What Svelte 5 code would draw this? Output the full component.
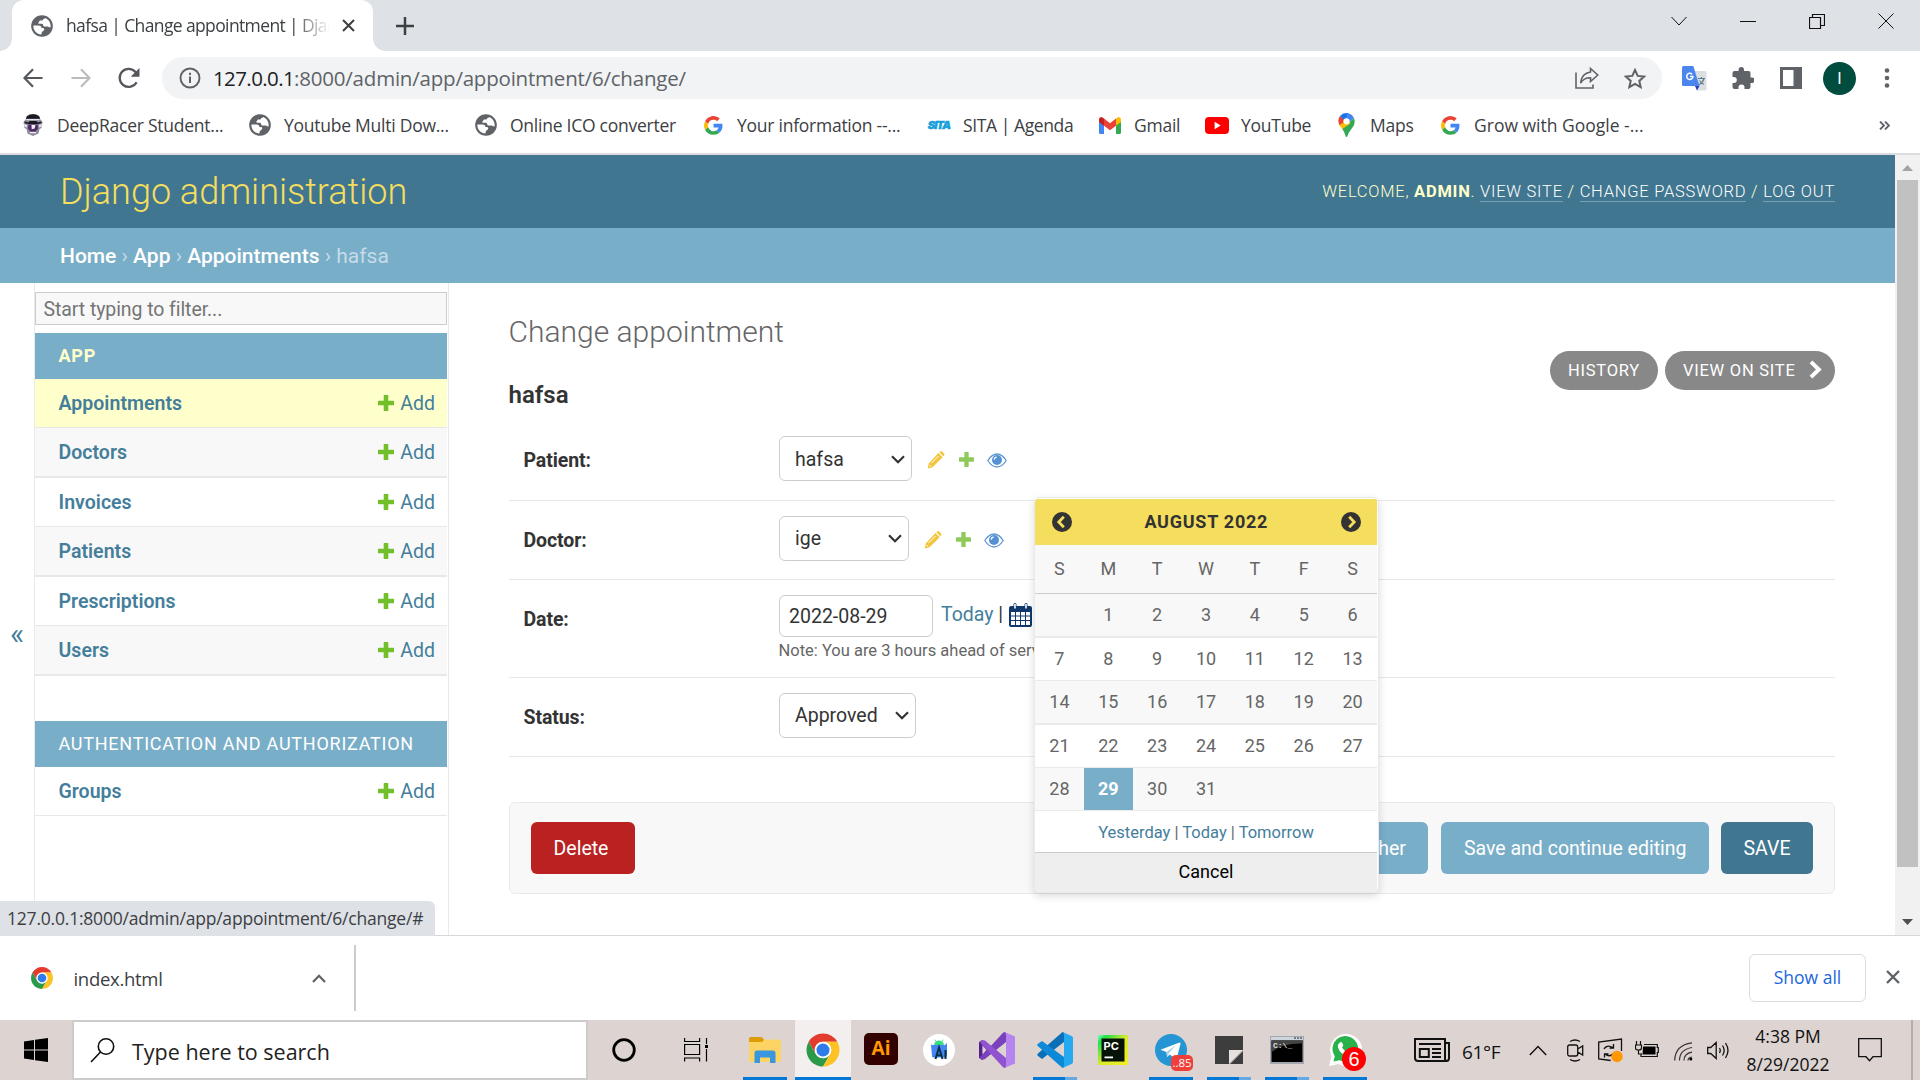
<script>
  const bookmarks = [
    { icon: 'racer', label: 'DeepRacer Student...' },
    { icon: 'globe', label: 'Youtube Multi Dow...' },
    { icon: 'globe', label: 'Online ICO converter' },
    { icon: 'google', label: 'Your information --...' },
    { icon: 'sita', label: 'SITA | Agenda' },
    { icon: 'gmail', label: 'Gmail' },
    { icon: 'youtube', label: 'YouTube' },
    { icon: 'maps', label: 'Maps' },
    { icon: 'google', label: 'Grow with Google -...' }
  ];
  const models = ['Appointments', 'Doctors', 'Invoices', 'Patients', 'Prescriptions', 'Users'];
  const weeks = [
    ['', 1, 2, 3, 4, 5, 6],
    [7, 8, 9, 10, 11, 12, 13],
    [14, 15, 16, 17, 18, 19, 20],
    [21, 22, 23, 24, 25, 26, 27],
    [28, 29, 30, 31, '', '', '']
  ];
  const days = ['S', 'M', 'T', 'W', 'T', 'F', 'S'];
  const apps = [
    { id: 'explorer', run: 'one' },
    { id: 'chrome', run: 'active' },
    { id: 'ai', run: '' },
    { id: 'android', run: '' },
    { id: 'vs', run: '' },
    { id: 'code', run: 'multi' },
    { id: 'pycharm', run: '' },
    { id: 'telegram', run: 'one' },
    { id: 'notes', run: 'multi' },
    { id: 'cmd', run: 'multi' },
    { id: 'whatsapp', run: 'one' }
  ];
</script>

{#snippet globe()}
  <svg width="26" height="26" viewBox="0 0 24 24"><path fill="#5f6368" d="M12 2C6.48 2 2 6.48 2 12s4.48 10 10 10 10-4.48 10-10S17.52 2 12 2z" /><path fill="#fff" d="M14.8 4.5c3 1.100 5.200 4 5.200 7.500 0 .6-.1 1-.2 1.400-.9.300-1.600-.9-2.700-.9h-2.600c-1 0-1.500-.8-1.500-1.700 0-.8-1-.9-1.900-.9H9.400c-.7 0-1-.6-.6-1.200L10 7h2.300c.6 0 .5-1.200 1.100-1.400.6-.2 1.200-.4 1.400-1.100zM4.200 11.500h4.600c2 0 2.700 1.200 2.700 2.300h1.300c.9 0 1.400.8 1.200 1.600-.3 1.200-1.600 1.300-2 2.200-.3.700-.5 1.500-.6 2.300-4-.2-7.300-3.500-7.400-7.700z" /></svg>
{/snippet}

{#snippet chrome(size)}
  <svg width={size} height={size} viewBox="0 0 48 48">
    <path fill="#e33b2e" d="M24 13H43.05A22 22 0 0 0 4.950 13L14.470 29.500A11 11 0 0 1 24 13Z" />
    <path fill="#2a9a49" d="M14.470 29.500L4.950 13A22 22 0 0 0 24 46L33.530 29.500A11 11 0 0 1 14.470 29.500Z" />
    <path fill="#fdc223" d="M33.530 29.500L24 46A22 22 0 0 0 43.050 13H24A11 11 0 0 1 33.530 29.500Z" />
    <circle cx="24" cy="24" r="11" fill="#fff" /><circle cx="24" cy="24" r="8.700" fill="#2f7bea" />
  </svg>
{/snippet}

{#snippet plus(color, size)}
  <svg width={size} height={size} viewBox="0 0 16 16"><path fill={color} d="M6.300 0h3.400q.6 0 .6.600v5.100h5.100q.6 0 .6.600v3.400q0 .6-.6.600h-5.100v5.100q0 .6-.6.600H6.300q-.6 0-.6-.6v-5.100H.6q-.6 0-.6-.6V6.300q0-.6.6-.6h5.100V.6q0-.6.6-.6z" /></svg>
{/snippet}

{#snippet related()}
  <span class="related">
    <svg width="18" height="18" viewBox="0 0 18 18"><path fill="#efb80b" opacity=".8" d="M12.300 1.200l1.300-1q.6-.4 1.200.1l2.500 2.500q.5.600.1 1.200l-1.100 1.300zM11.400 2.100l4.300 4.200L5.300 16.400 0.800 17.500l.9-4.900z" /><path stroke="#fff" stroke-width="1" d="M4.500 12L11.500 5M2.500 14l1.600 1.700" /></svg>
    {@render plus('#8dca5a', 15)}
    <svg width="20" height="15" viewBox="0 0 20 15"><path fill="#fff" stroke="#5f97d3" stroke-width="1.300" d="M.8 7.500Q5 1 10 1t9.200 6.500Q15 14 10 14T.8 7.500z" /><circle cx="10" cy="7" r="5" fill="#5490d2" /><path d="M7.200 6.600a2.700 2.700 0 0 1 2.500-2.500" fill="none" stroke="#fff" stroke-width="1.200" /></svg>
  </span>
{/snippet}

{#snippet caret()}
  <svg width="14" height="9" viewBox="0 0 14 9"><path d="M1 1.200l6 6 6-6" fill="none" stroke="#333" stroke-width="2.200" /></svg>
{/snippet}

{#snippet siteIcon(name)}
  {#if name === 'globe'}
    {@render globe()}
  {:else if name === 'racer'}
    <svg width="20" height="22" viewBox="0 0 20 22"><path fill="#8d8998" d="M3 5q0-5 7-5t7 5l2.500 3-1 6-2 1-1 4.500-5.500 2.500-5.500-2.500-1-4.500-2-1-1-6z" /><path fill="#1a1820" d="M4 2.200Q10-1.500 16 2.200l1.200 2.600H2.800zM1.500 7.500l4 1 1-1.500h7l1 1.500 4-1-.3 1.800-3.200.7h-10l-3.200-.7z" /><path fill="#e4e2ec" d="M3 5h14l-.8 1.300H3.800zM1 10l3 .8v2.700l-2.500-.8zM19 10l-3 .8v2.700l2.500-.8z" /><path fill="#4b2a66" d="M5.500 10.500h9l.5 4-2.500 3h-5L5 14.500z" /><path fill="#f3eff9" d="M8.500 11h4l-.8 3.500-3 .8zM6.500 18h7l-1 1.300h-5z" /></svg>
  {:else if name === 'google'}
    <svg width="19" height="19" viewBox="2 2 44 44"><path fill="#fbbc05" d="M11.500 28.200a13 13 0 0 1 0-8.400l-7-5.500a21.500 21.500 0 0 0 0 19.400z" /><path fill="#ea4335" d="M24 10.800c3.200 0 6 1.100 8.200 3.200l6.200-6.200A21.500 21.500 0 0 0 4.500 14.300l7.100 5.500C13.300 14.600 18.200 10.800 24 10.800z" /><path fill="#34a853" d="M24 45.500c5.800 0 10.700-1.900 14.200-5.200l-6.900-5.400A13 13 0 0 1 11.500 28.200l-7 5.500A21.500 21.500 0 0 0 24 45.500z" /><path fill="#4285f4" d="M24 20v8.600h11.700c-.5 2.700-2 4.800-4.400 6.300l6.900 5.400c5.600-5.100 7.600-12.800 6.200-20.300z" /></svg>
  {:else if name === 'sita'}
    <span class="sita">SITA</span>
  {:else if name === 'gmail'}
    <svg width="22" height="17" viewBox="0 0 22 17"><path fill="#4285f4" d="M0 3.500V15.500q0 1.500 1.500 1.500H5V7.500z" /><path fill="#34a853" d="M17 7.500V17h3.500q1.500 0 1.500-1.500v-12z" /><path fill="#c5221f" d="M0 5V2.500Q0 0 2.200 0q1 0 2.800 1.500V8.700z" /><path fill="#fbbc04" d="M22 5V2.500Q22 0 19.800 0q-1 0-2.800 1.500V8.700z" /><path fill="#ea4335" d="M5 1.500l6 4.700 6-4.700v7.200l-6 4.600-6-4.600z" /></svg>
  {:else if name === 'youtube'}
    <svg width="24" height="17" viewBox="0 0 24 17"><rect width="24" height="17" rx="4" fill="#f00" /><path fill="#fff" d="M9.600 4.800l6 3.700-6 3.700z" /></svg>
  {:else}
    <svg width="17" height="24" viewBox="0 0 17 24"><path fill="#34a853" d="M8.500 24q-1 0-1.300-2Q6.500 19 4 15.500L16 5q1.500 4-.5 8l-3.200 4.500Q10.500 20 9.800 22q-.3 2-1.300 2z" /><path fill="#fbbc04" d="M1.300 12L8 5.500l4.500 5L4.300 16z" /><path fill="#ea4335" d="M2 3l6 5-6.600 4Q-1 7 2 3z" /><path fill="#1a73e8" d="M2 3Q5-.7 10.500.3L7 8z" /><path fill="#4285f4" d="M10.500.3Q14.500 1.500 16 5l-6 5-4-2z" /><circle cx="8.500" cy="8.300" r="3.100" fill="#fff" /></svg>
  {/if}
{/snippet}

{#snippet appIcon(id)}
  {#if id === 'explorer'}
    <svg width="32" height="27" viewBox="0 0 32 27"><path fill="#dd9d07" d="M0 1.500Q0 0 1.500 0h11L15 2.500V6H0z" /><path fill="#fdd363" d="M0 5h13l2.500-2.500h15Q32 2.500 32 4v19.500q0 1.500-1.500 1.500h-29Q0 25 0 23.500z" /><path fill="#3a96dd" d="M5.500 26V16q0-2.500 2.500-2.500h16q2.500 0 2.500 2.500v10H21v-5.500H11V26z" /></svg>
  {:else if id === 'chrome'}
    {@render chrome(36)}
  {:else if id === 'ai'}
    <span class="ai">Ai</span>
  {:else if id === 'android'}
    <svg width="32" height="32" viewBox="0 0 32 32"><circle cx="16" cy="16" r="16" fill="#fff" /><path fill="#4285f4" d="M8 10.500l2 .5h12l2-2v12.500q0 2-2 2H10.500q-1.500 0-1.500-1.500z" /><path fill="#3ddc84" d="M11 11q.5-4.500 5-4.500t5 4.500z" /><path stroke="#3ddc84" d="M13 7.500l-1.300-1.800M19 7.500l1.300-1.800" /><path fill="none" stroke="#073042" stroke-width="2" d="M12.500 25l3.500-11.500 3.500 11.500M12.800 20.500q3 1.500 6.200 0M22.500 16v9" /></svg>
  {:else if id === 'vs'}
    <svg width="36" height="36" viewBox="0 0 36 36"><path fill="#6b38a8" d="M0 10l3-2 6 4.500v11L3 28l-3-2z" /><path fill="#52218a" d="M0 10l3 3v10l-3 3z" /><path fill="#ddd4d2" d="M3.500 13.500l4 4.500-4 4.500z" /><path fill="#7b40bb" d="M25.500 0q2 0 1.500 3v7L6 27l-3 1-2-2 3.500-4L24 .8z" /><path fill="#9153cf" d="M25.500 36q2 0 1.500-3v-7L6 8.500 3 8l-2 2 3.500 4L24 35.200z" /><path fill="#b684ef" d="M25.500 0L36 4.500v27L25.500 36q1.500-.8 1.500-3V3q0-2-1.500-3z" /></svg>
  {:else if id === 'code'}
    <svg width="36" height="36" viewBox="0 0 36 36"><path fill="#0b6fb8" d="M25.500 0q2 0 1.500 3v7L5 27l-4-3q-1.500-1.200 0-2.500z" /><path fill="#0d89d8" d="M25.500 36q2 0 1.500-3v-8L5 9l-4 2.800q-1.500 1.200 0 2.500z" /><path fill="#27a9f2" d="M25.500 0L34.500 4Q36 4.700 36 6v24q0 1.300-1.500 2l-9 4q1.500-.8 1.500-3V3q0-2-1.500-3z" /></svg>
  {:else if id === 'pycharm'}
    <svg width="30" height="30" viewBox="0 0 30 30"><defs><linearGradient id="pcg" x2="1" y2="1"><stop offset="0" stop-color="#8affc0" /><stop offset=".15" stop-color="#21e04d" /><stop offset=".5" stop-color="#d7ea2c" /><stop offset="1" stop-color="#f4ef20" /></linearGradient></defs><rect width="30" height="30" fill="url(#pcg)" /><rect x="3.500" y="3.500" width="23" height="23" fill="#071308" /><text x="5.500" y="15" class="pct">PC</text><rect x="6.500" y="21.500" width="8.500" height="1.800" fill="#fff" /></svg>
  {:else if id === 'telegram'}
    <span class="badged"><svg width="32" height="32" viewBox="0 0 32 32"><circle cx="16" cy="16" r="16" fill="#2595d3" /><path fill="#fff" d="M5.500 15.800L24.500 8.500q1.200 0 1 1.300L22 23.500q-1 1.500-2.500.5l-4.800-3.500-2.500 2.400-.8-4.900z" /><path fill="#a9cfe6" d="M11.500 18l9.500-7-7 8-2 4z" /></svg><b class="tg">..85</b></span>
  {:else if id === 'notes'}
    <svg width="28" height="28" viewBox="0 0 28 28"><path fill="#3d3d3d" d="M0 0h28v14l-14 14H0z" /><path fill="#e6e1df" d="M14 14h14L14 28z" /><path fill="#3d3d3d" d="M28 15v13H15z" /></svg>
  {:else if id === 'cmd'}
    <svg width="34" height="28" viewBox="0 0 34 28"><rect width="34" height="28" fill="#a2a8b0" /><rect x="1" y="1" width="32" height="3" fill="#cfd5dd" /><path stroke="#56606c" stroke-dasharray="2 1" stroke-width="1.500" d="M24 2h8" /><rect x="1.500" y="4.500" width="31" height="21.500" fill="#000" /><path fill="#444" d="M1.500 4.500h31v3Q12 7 1.500 16z" /><text x="3" y="11.500" class="cmdt">C:\_</text></svg>
  {:else}
    <span class="badged"><svg width="34" height="34" viewBox="0 0 34 34"><path fill="#fff" d="M1 33l2.500-9.500A16 16 0 1 1 10.500 31z" /><path fill="#29b24c" d="M5.500 28.500l1.300-5.300A12.800 12.800 0 1 1 11.500 27.300z" /><path fill="#fff" d="M12 9.500q1.500-1 2.300.5l1 2.500-1.200 2q1.800 3.500 5 4.800l1.700-1.700 3.500 1.900q.5 3.500-4 3.500-8-1-10.500-9-.2-3.300 2.200-4.500z" /></svg><b class="wa">6</b></span>
  {/if}
{/snippet}

<div class="screen">
  <header class="tabs">
    <div class="tab">
      {@render globe()}
      <span class="tab-title">hafsa | Change appointment | Django site</span>
      <svg width="13" height="13" viewBox="0 0 13 13"><path d="M1 1l11 11M12 1L1 12" stroke="#3c4043" stroke-width="2" /></svg>
    </div>
    <svg class="newtab" width="18" height="18" viewBox="0 0 18 18"><path d="M9 0v18M0 9h18" stroke="#3c4043" stroke-width="2.500" /></svg>
    <div class="wins">
      <svg width="16" height="16" viewBox="0 0 16 16"><path d="M.5 4l7.500 8 7.500-8" fill="none" stroke="#111" /></svg>
      <svg width="16" height="16" viewBox="0 0 16 16"><path d="M0 8.500h16" stroke="#111" /></svg>
      <svg width="16" height="16" viewBox="0 0 16 16"><path d="M.5 4.500h11v11h-11zM3.500 4.500v-3h12v11h-4" fill="none" stroke="#111" stroke-width="1.200" /></svg>
      <svg width="16" height="16" viewBox="0 0 16 16"><path d="M.5.500l15 15M15.500.5l-15 15" stroke="#111" /></svg>
    </div>
  </header>

  <div class="toolbar">
    <svg width="20" height="20" viewBox="0 0 20 20"><path d="M19.500 10H2M10 1.200L1.500 10l8.500 8.800" fill="none" stroke="#54585d" stroke-width="2.200" /></svg>
    <svg width="20" height="20" viewBox="0 0 20 20"><path d="M.5 10H18M10 1.200L18.500 10 10 18.800" fill="none" stroke="#babcbe" stroke-width="2.200" /></svg>
    <svg width="22" height="22" viewBox="0 0 22 22"><path d="M18.600 15.200A9 9 0 1 1 17.500 5l1.500 2" fill="none" stroke="#54585d" stroke-width="2.300" /><path fill="#54585d" d="M21.500 1v8.800h-8.800z" /></svg>
    <div class="omnibox">
      <svg width="22" height="22" viewBox="0 0 22 22"><circle cx="11" cy="11" r="9.500" fill="none" stroke="#5f6368" stroke-width="1.900" /><path d="M11 9.500v6.500M11 5.800v2.200" stroke="#5f6368" stroke-width="2" /></svg>
      <span class="url"><b>127.0.0.1</b>:8000/admin/app/appointment/6/change/</span>
      <svg width="24" height="22" viewBox="0 0 24 22"><path d="M1 5.500V21h17v-3.500" fill="none" stroke="#5f6368" stroke-width="1.600" /><path d="M15.500 1.500L22.800 8l-7.300 6.500v-3.700Q9 10.500 5.500 16 6.500 6.500 15.500 5z" fill="none" stroke="#5f6368" stroke-width="1.600" /></svg>
      <svg width="22" height="21" viewBox="0 0 22 21"><path d="M11 2l2.700 5.900 6.400.7-4.800 4.300 1.400 6.300L11 16l-5.700 3.200 1.400-6.300L1.900 8.600l6.400-.7z" fill="none" stroke="#5f6368" stroke-width="2" /></svg>
    </div>
    <div class="exts">
      <svg width="25" height="25" viewBox="0 0 25 25"><path fill="#dcdfe2" d="M9 5h14q1.500 0 1.500 1.500V23q0 1.500-1.500 1.500h-8z" /><path fill="#4a86ee" d="M1.500 0h9.800l6.200 20H1.500Q0 20 0 18.500v-17Q0 0 1.500 0z" /><path fill="#2a3fb5" d="M13 20h4.500L15 24.500z" /><path d="M16 12.500h7M19.500 11v1.500M22 12.500q-1 4-5 6M17.500 14.500q2 3 4.500 4" fill="none" stroke="#607d8b" stroke-width="1.200" /><path d="M10 8.200A3.100 3.100 0 1 0 10.900 10.500H8" fill="none" stroke="#fff" stroke-width="1.500" /></svg>
      <svg width="22" height="22" viewBox="0 0 22 22"><path fill="#5f6368" d="M20 10.500h-1.500V6q0-2-2-2H12V2.700a2.700 2.700 0 0 0-5.400 0V4H2.500Q.5 4 .5 6v4h1.300a3 3 0 0 1 0 6H.5v4q0 2 2 2h4v-1.500a3 3 0 0 1 6 0V22h4q2 0 2-2v-4H20a2.700 2.700 0 0 0 0-5.500z" /></svg>
      <svg width="22" height="22" viewBox="0 0 22 22"><path fill="#5f6368" fill-rule="evenodd" d="M0 0h22v22H0zM3 3v16h10.500V3z" /></svg>
      <span class="avatar">I</span>
      <svg width="6" height="20" viewBox="0 0 6 20"><circle cx="3" cy="2.500" r="2.300" fill="#5f6368" /><circle cx="3" cy="10" r="2.300" fill="#5f6368" /><circle cx="3" cy="17.500" r="2.300" fill="#5f6368" /></svg>
    </div>
  </div>

  <nav class="bookmarks">
    {#each bookmarks as b}
      <span class="bm"><i>{@render siteIcon(b.icon)}</i>{b.label}</span>
    {/each}
    <svg width="11" height="9" viewBox="0 0 11 9"><path d="M1 .5l4 4-4 4M6 .5l4 4-4 4" fill="none" stroke="#5f6368" stroke-width="1.800" /></svg>
  </nav>

  <div class="viewport">
    <div class="site">
      <div class="branding">
        <h1>Django administration</h1>
        <div class="tools">Welcome, <strong>admin</strong>. <a href="#v">View site</a> / <a href="#c">Change password</a> / <a href="#l">Log out</a></div>
      </div>
      <div class="crumbs"><b>Home</b> › <b>App</b> › <b>Appointments</b> › hafsa</div>
      <div class="body">
        <div class="toggle">«</div>
        <aside>
          <div class="filter">Start typing to filter...</div>
          <h3 class="cur">App</h3>
          {#each models as m, i}
            <div class="model" class:current={i === 0} class:even={i % 2 === 1}><b>{m}</b><span>{@render plus('#70bf2b', 16)}Add</span></div>
          {/each}
          <h3 class="auth">Authentication and Authorization</h3>
          <div class="model"><b>Groups</b><span>{@render plus('#70bf2b', 16)}Add</span></div>
        </aside>
        <main>
          <div class="object-tools"><span>History</span><span>View on site <svg width="13" height="19" viewBox="0 0 13 19"><path d="M2 1.800l7.800 7.700L2 17.200" fill="none" stroke="#fff" stroke-width="4" /></svg></span></div>
          <h1>Change appointment</h1>
          <h2>hafsa</h2>
          <div class="row r1"><label for="p">Patient:</label><div class="select p" id="p">hafsa{@render caret()}</div>{@render related()}</div>
          <div class="row"><label for="d">Doctor:</label><div class="select d" id="d">ige{@render caret()}</div>{@render related()}</div>
          <div class="row r3">
            <label for="dt">Date:</label>
            <div>
              <div class="dateline"><div class="input" id="dt">2022-08-29</div><span class="short"><a href="#t">Today</a>&nbsp;|</span>
                <svg width="23" height="24" viewBox="0 0 23 24"><path fill="#10386b" d="M2 3h2.500V1.500Q4.500 0 6 0t1.500 1.500V3h8V1.500Q15.500 0 17 0t1.500 1.500V3H21q2 0 2 2v17q0 2-2 2H2q-2 0-2-2V5q0-2 2-2z" /><path stroke="#fff" stroke-width="1.600" d="M6 1v4.500M17 1v4.500" /><path fill="#fff" d="M2 9h4v3.500H2zM7 9h4v3.500H7zM12 9h4v3.500h-4zM17 9h4v3.500h-4zM2 13.500h4V17H2zM7 13.500h4V17H7zM12 13.500h4V17h-4zM17 13.500h4V17h-4zM2 18h4v4H2zM7 18h4v4H7zM12 18h4v4h-4zM17 18h4v4h-4z" /></svg>
              </div>
              <div class="note">Note: You are 3 hours ahead of server time.</div>
            </div>
          </div>
          <div class="row"><label for="s">Status:</label><div class="select s" id="s">Approved{@render caret()}</div></div>
          <div class="submit">
            <span class="btn del">Delete</span>
            <span class="btn add">Save and add another</span>
            <span class="btn">Save and continue editing</span>
            <span class="btn def">SAVE</span>
          </div>

          <div class="calendar">
            <div class="caption">
              <svg width="20" height="20" viewBox="0 0 20 20"><circle cx="10" cy="10" r="10" fill="#333" /><path d="M11.800 4.800L6.800 10l5 5.200" fill="none" stroke="#f5dd5d" stroke-width="2.800" /></svg>
              <span>August 2022</span>
              <svg width="20" height="20" viewBox="0 0 20 20"><circle cx="10" cy="10" r="10" fill="#333" /><path d="M8.200 4.800l5 5.200-5 5.200" fill="none" stroke="#f5dd5d" stroke-width="2.800" /></svg>
            </div>
            <div class="week heads">{#each days as d}<span>{d}</span>{/each}</div>
            {#each weeks as w, i}
              <div class="week" class:odd={i % 2 === 0} class:thick={i === 0 || i === 2}>
                {#each w as d}<span class:selected={d === 29}>{d}</span>{/each}
              </div>
            {/each}
            <div class="shortcuts"><a href="#y">Yesterday</a> | <a href="#t">Today</a> | <a href="#m">Tomorrow</a></div>
            <div class="cancel">Cancel</div>
          </div>
        </main>
      </div>
    </div>
    <div class="scroll">
      <svg width="11" height="6" viewBox="0 0 11 6"><path d="M0 6L5.500 0 11 6z" fill="#a3a3a3" /></svg>
      <div class="thumb"></div>
      <svg class="down" width="11" height="6" viewBox="0 0 11 6"><path d="M0 0h11L5.500 6z" fill="#505050" /></svg>
    </div>
    <div class="status">127.0.0.1:8000/admin/app/appointment/6/change/#</div>
  </div>

  <div class="downloads">
    {@render chrome(24)}
    <span class="file">index.html</span>
    <svg width="14" height="9" viewBox="0 0 14 9"><path d="M1 8l6-6.200L13 8" fill="none" stroke="#5f6368" stroke-width="2.200" /></svg>
    <div class="sep"></div>
    <span class="showall">Show all</span>
    <svg width="14" height="14" viewBox="0 0 14 14"><path d="M1 1l12 12M13 1L1 13" stroke="#5f6368" stroke-width="2.400" /></svg>
  </div>

  <footer class="taskbar">
    <div class="start"><svg width="24" height="24" viewBox="0 0 24 24"><path d="M0 3.400L10 2v9.500H0zM11 1.800L24 0v11.500H11zM0 12.500h10V22L0 20.600zM11 12.500h13V24l-13-1.800z" /></svg></div>
    <div class="search">
      <svg width="25" height="25" viewBox="0 0 25 25"><circle cx="16" cy="8.500" r="7.700" fill="none" stroke="#111" stroke-width="1.600" /><path d="M10.500 14L1 24" stroke="#111" stroke-width="1.600" /></svg>
      <span>Type here to search</span>
    </div>
    <div class="cortana"><svg width="24" height="24" viewBox="0 0 24 24"><circle cx="12" cy="12" r="10.300" fill="none" stroke="#000" stroke-width="2.800" /></svg></div>
    <div class="taskview"><svg width="25" height="24" viewBox="0 0 25 24"><path d="M.6 0v3.500h15V0M.6 6.500h15v10H.6zM.6 23.500V20h15v3.500M22.500 0v6M22.500 11v12.500" fill="none" stroke="#000" stroke-width="1.200" /><path d="M21 7h3v3h-3z" /></svg></div>
    {#each apps as a}
      <div class="app {a.run}">{@render appIcon(a.id)}</div>
    {/each}
    <div class="tray">
      <svg class="news" width="36" height="24" viewBox="0 0 36 24"><path d="M1 1h30v20q0 2 2 2H4q-3 0-3-3zM31 5h4v15q0 3-2.500 3" fill="none" stroke="#111" stroke-width="2" /><path d="M5 6h22M18 11h9M18 15h9M18 19h9M5.800 11h9v8h-9z" fill="none" stroke="#111" stroke-width="2" /></svg>
      <span class="temp">61°F</span>
      <svg class="chev" width="18" height="11" viewBox="0 0 18 11"><path d="M.8 10L9 1.500 17.200 10" fill="none" stroke="#111" stroke-width="1.400" /></svg>
      <svg class="meet" width="17" height="23" viewBox="0 0 17 23"><path d="M3 2.500q5-3 10 0M3 20.500q5 3 10 0M.7 8q0-2 2-2h6q2 0 2 2v7q0 2-2 2h-6q-2 0-2-2zM10.700 10l5-3v9l-5-3" fill="none" stroke="#111" stroke-width="1.300" /></svg>
      <svg class="sync" width="25" height="25" viewBox="0 0 25 25"><path d="M23.500 13V1L.7 4v17l12 1.500M6 11q3-5 9-1.500M15.500 6v4h-4M16 15q-4 5-9 1M6.500 19.500V16h4" fill="none" stroke="#111" stroke-width="1.300" /><circle cx="19" cy="18.500" r="5.700" fill="#ff9800" /></svg>
      <svg class="batt" width="24" height="18" viewBox="0 0 24 18"><path d="M9 3.500h13.300v3h1v5h-1v4H6V12" fill="none" stroke="#111" stroke-width="1.200" /><path d="M8 5.500h12.500v8H7.500z" fill="#000" /><path d="M1.500 0v4M5.500 0v4M.5 4h6v3q0 2-3 2-3 0-3-2zM3.500 9v4H7" fill="#ddd4d2" stroke="#111" stroke-width="1.200" /></svg>
      <svg class="wifi" width="19" height="19" viewBox="0 0 19 19"><path d="M.7 18.500Q1 3 18 .8M5.500 18.500Q5.500 7.500 18 5.500M10 18.500Q10 11.500 18 10.200M14 18.500q0-3 4-3.500" fill="none" stroke="#333" stroke-width="1.200" /><circle cx="16.800" cy="17" r="1.500" /></svg>
      <svg class="vol" width="22" height="19" viewBox="0 0 22 19"><path d="M.7 6.500h3l5.500-5v16l-5.500-5h-3zM12.500 7q1.500 2.500 0 5M15.500 4.500q3.300 5 0 10M18.500 2q5 7.500 0 15" fill="none" stroke="#111" stroke-width="1.300" /></svg>
      <span class="clock"><span>4:38 PM</span><span>8/29/2022</span></span>
      <svg class="notif" width="24" height="24" viewBox="0 0 24 24"><path d="M.7.7h22.600v18H15l-3.500 4-3.500-4H.7z" fill="none" stroke="#111" stroke-width="1.300" /></svg>
      <div class="peek"></div>
    </div>
  </footer>
</div>

<style>
  :global(body) { margin: 0; overflow: hidden; }
  .screen { width: 1920px; height: 1080px; display: flex; flex-direction: column; background: #fff; overflow: hidden; font-family: "Open Sans", "Noto Sans", sans-serif; }
  .screen :global(svg) { display: block; flex: none; }
  .screen * { box-sizing: border-box; }
  a { color: #447e9b; text-decoration: none; }
  h1, h2, h3 { margin: 0; font-weight: 400; }

  .tabs { height: 51px; flex: none; background: #dee1e6; display: flex; align-items: center; padding-left: 12px; }
  .tab { position: relative; width: 361px; height: 51px; background: #fff; border-radius: 12px 12px 0 0; display: flex; align-items: center; padding: 0 18px 0 17px; }
  .tab::before, .tab::after { content: ""; position: absolute; bottom: 0; width: 12px; height: 12px; }
  .tab::before { left: -12px; background: radial-gradient(circle at 0 0, transparent 11.5px, #fff 12px); }
  .tab::after { right: -12px; background: radial-gradient(circle at 100% 0, transparent 11.5px, #fff 12px); }
  .tab-title { width: 265px; margin: 0 16px 1px 11px; overflow: hidden; white-space: nowrap; font-size: 17.5px; letter-spacing: -0.62px; color: #3c4043; mask-image: linear-gradient(90deg, #000 86%, transparent); }
  .tab > :global(svg:last-child) { margin-left: -4px; }
  .newtab { margin-left: 23px; }
  .wins { margin-left: auto; display: flex; gap: 53px; padding: 0 26px 9px 0; }

  .toolbar { height: 54px; flex: none; display: flex; align-items: center; padding-left: 23px; }
  .toolbar > :global(svg:nth-child(2)) { margin-left: 28px; }
  .toolbar > :global(svg:nth-child(3)) { margin-left: 27px; }
  .omnibox { width: 1500px; height: 42px; margin-left: 22px; border-radius: 21px; background: #f1f3f4; display: flex; align-items: center; padding: 0 16px 0 16.500px; }
  .url { flex: 1; margin-left: 12.500px; font-size: 20.5px; letter-spacing: -0.21px; color: #5f6368; }
  .url b { font-weight: 400; letter-spacing: -.6px; color: #202124; }
  .omnibox > :global(svg:last-child) { margin-left: 25px; }
  .exts { flex: 1; display: flex; align-items: center; padding-left: 20px; }
  .exts > :global(svg:nth-child(2)) { margin-left: 25px; }
  .exts > :global(svg:nth-child(3)) { margin-left: 26px; }
  .avatar { width: 33px; height: 33px; border-radius: 50%; background: #004d40; color: #fff; font: 16px/33px Roboto, sans-serif; text-align: center; margin: 0 28px 0 21px; }

  .bookmarks { height: 50px; flex: none; border-bottom: 2px solid #dadce0; padding-left: 21px; display: grid; grid-template-columns: 227px 226px 227px 226px 171px 107px 129px 104px 441px auto; align-items: center; padding-bottom: 8px; }
  .bm { display: flex; align-items: center; white-space: nowrap; font-size: 17.5px; letter-spacing: -.25px; color: #3c4043; }
  .bm:nth-child(5) { letter-spacing: -.4px; }
  .bm:nth-child(9) { letter-spacing: 0; }
  .bm i { width: 24px; margin-right: 12px; display: flex; justify-content: center; }
  .sita { font: italic 900 11px Inter, sans-serif; letter-spacing: -0.8px; color: #18a0da; -webkit-text-stroke: .5px #18a0da; }

  .viewport { height: 781px; flex: none; display: flex; position: relative; border-bottom: 1px solid #d5d7da; font-family: Roboto, "Liberation Sans", sans-serif; }
  .site { width: 1895px; }
  .branding { height: 73px; background: #417690; display: flex; align-items: center; justify-content: space-between; padding: 0 60px; color: #ffc; }
  .branding h1 { font-size: 36px; font-weight: 300; color: #f5dd5d; }
  .tools { font-size: 16.5px; font-weight: 300; letter-spacing: .75px; text-transform: uppercase; }
  .tools strong { font-weight: 700; }
  .tools a { color: #fff; border-bottom: 1px solid rgba(255, 255, 255, .3); }
  .crumbs { height: 55px; background: #79aec8; color: #c4dce8; font-size: 21px; line-height: 56px; padding-left: 60px; }
  .crumbs b { font-weight: 500; color: #fff; }
  .body { height: 652px; display: flex; }
  .toggle { width: 34px; display: flex; align-items: center; padding: 48px 0 0 10px; font-size: 30px; color: #447e9b; font-weight: 400; }
  aside { width: 415px; border: solid #eaeaea; border-width: 0 1px; padding: 9px 1px 0 0; font-size: 19.5px; }
  .filter { height: 33px; border: 1px solid #ccc; background: #f8f8f8; color: #757575; line-height: 33px; padding-left: 7.500px; margin-bottom: 8px; letter-spacing: -.08px; }
  aside h3 { height: 46px; background: #79aec8; color: #fff; font-size: 18px; line-height: 46px; letter-spacing: .75px; text-transform: uppercase; padding-left: 23.500px; white-space: nowrap; }
  aside h3.cur { color: #ffc; font-weight: 700; }
  aside h3.auth { margin-top: 45px; }
  .model { height: 49px; border-bottom: 1px solid #e8e8e8; display: flex; justify-content: space-between; align-items: center; padding: 0 12px 0 23.500px; color: #447e9b; background: #fff; }
  .model b { font-weight: 600; letter-spacing: .03px; }
  .model span { display: flex; align-items: center; gap: 6px; font-weight: 400; }
  .model span :global(svg) { margin-bottom: 1px; }
  .model.even { height: 50px; border-bottom-width: 2px; background: #f8f8f8; }
  .model.current { background: #ffc; }

  main { flex: 1; padding: 31px 60px 0; position: relative; color: #333; font-size: 19.5px; }
  main h1 { font-size: 30px; line-height: 36px; font-weight: 300; color: #666; margin-left: -.5px; }
  main h2 { font-size: 24px; font-weight: 600; line-height: 30px; margin: 30px 0 11px -.5px; }
  .object-tools { position: absolute; right: 60px; top: 68px; display: flex; gap: 7px; }
  .object-tools span { height: 39px; border-radius: 20px; background: #888; color: #fff; font-size: 16.5px; letter-spacing: .75px; text-transform: uppercase; display: flex; align-items: center; padding: 0 17px 0 18px; }
  .object-tools span:first-child { width: 108px; }
  .object-tools span:last-child { width: 170px; justify-content: space-between; padding-right: 13px; }
  .object-tools :global(svg) { margin-bottom: 2px; }
  .row { height: 79px; border-bottom: 1px solid #e8e8e8; padding: 15px 0 0 14.500px; display: flex; align-items: flex-start; }
  .row.r1 { height: 80px; }
  .row.r3 { height: 98px; }
  label { width: 255.500px; flex: none; font-weight: 700; font-size: 19.5px; line-height: 23px; padding-top: 13px; letter-spacing: -.1px; }
  .select { height: 45px; border: 1px solid #ccc; border-radius: 6px; display: flex; align-items: center; justify-content: space-between; padding: 0 6px 0 15px; color: #333; }
  .select.p { width: 133px; padding-top: 1px; }
  .select.d { width: 130px; }
  .select.s { width: 137px; }
  .related { height: 48px; display: flex; align-items: center; gap: 13px; padding-left: 15px; }
  .related > :global(svg:nth-child(2)) { margin: 0 -.5px 1px 1px; }
  .dateline { display: flex; height: 42px; }
  .input { width: 154px; height: 42px; border: 1px solid #ccc; border-radius: 6px; line-height: 41px; padding-left: 9px; }
  .short { padding: 8px 6px 0 8px; line-height: 23px; }
  .dateline :global(svg) { margin-top: 8px; }
  .note { margin: 4px 0 0 -.5px; font-size: 16.5px; line-height: 20px; color: #666; white-space: nowrap; }
  .submit { margin-top: 45px; height: 92px; border: 1px solid #eaeaea; border-radius: 6px; background: #f8f8f8; display: flex; align-items: center; gap: 12px; padding: 0 21px; }
  .btn { height: 52px; line-height: 53px; border-radius: 6px; background: #79aec8; color: #fff; padding: 0 22.500px; font-size: 19.5px; }
  .btn.del { background: #ba2121; margin-right: auto; width: 104px; }
  .btn.add { margin-right: 1px; }
  .btn.def { background: #417690; }

  .calendar { position: absolute; left: 585px; top: 214px; width: 345px; height: 396px; border: 1px solid #eaeaea; border-radius: 6px; background: #fff; box-shadow: 0 3px 9px rgba(0, 0, 0, .15); padding: 1px 1px 1px 0; overflow: hidden; font-size: 18px; color: #666; }
  .caption { height: 46px; background: #f5dd5d; display: flex; align-items: center; justify-content: space-between; padding: 0 16px 0 16.500px; font-weight: 700; font-size: 18px; color: #333; text-transform: uppercase; letter-spacing: .75px; }
  .caption span { margin-bottom: 2px; }
  .week { display: grid; grid-template-columns: repeat(7, 1fr); height: 43px; border-bottom: 1px solid #eaeaea; text-align: center; line-height: 41px; }
  .week.odd { background: #f8f8f8; }
  .week.thick { height: 44px; border-bottom-width: 2px; }
  .week.heads { height: 49px; line-height: 47px; background: #f8f8f8; border-bottom-color: #ccc; }
  .selected { background: #79aec8; color: #fff; font-weight: 700; }
  .shortcuts { height: 42px; line-height: 43px; text-align: center; font-size: 16.5px; border-bottom: 1px solid #ccc; }
  .cancel { height: 39px; line-height: 38px; text-align: center; background: #eee; color: #000; }

  .scroll { width: 25px; background: #f1f1f1; display: flex; flex-direction: column; align-items: center; padding: 10px 0; }
  .thumb { width: 21px; height: 687px; margin-top: 9px; background: #c1c1c1; }
  .down { margin-top: auto; }
  .status { position: absolute; left: 0; bottom: -1px; width: 435px; height: 35px; background: #dee1e6; border-radius: 0 6px 0 0; padding-left: 7px; font: 17.5px/35px "Open Sans", "Noto Sans", sans-serif; letter-spacing: -.21px; color: #3c4043; white-space: nowrap; }

  .downloads { height: 84px; flex: none; display: flex; align-items: center; padding-left: 30px; }
  .file { width: 238.500px; margin-left: 19.500px; font-size: 18.5px; letter-spacing: -.3px; color: #3c4043; padding-top: 1px; }
  .sep { width: 2px; height: 66px; background: #ccc; margin-left: 28px; }
  .showall { margin: 0 20px 0 auto; width: 117px; height: 48px; border: 1px solid #dadce0; border-radius: 6px; color: #1a66e0; font: 500 17.5px/44px "Open Sans", sans-serif; letter-spacing: 0; text-align: center; }
  .downloads > :global(svg:last-child) { margin: 0 20px 2px 0; }

  .taskbar { height: 60px; flex: none; display: flex; background: #ddd4d2; }
  .start { width: 72px; display: flex; align-items: center; justify-content: center; }
  .search { width: 516px; height: 60px; border: 2px solid #ccc; background: #fff; display: flex; align-items: center; padding-left: 15.500px; font-size: 21.5px; letter-spacing: 0; color: #222; gap: 17.500px; }
  .search span { padding-top: 2px; }
  .cortana, .taskview, .app { display: flex; align-items: center; justify-content: center; }
  .cortana { width: 72px; }
  .taskview { width: 76px; padding-right: 3px; }
  .app { width: 58px; position: relative; }
  .app.active { width: 56px; margin: 0 1px; background: #f3efee; border-bottom: 3px solid #0078d7; padding-top: 3px; }
  .one::after, .multi::after { content: ""; position: absolute; left: 7px; right: 7px; bottom: 0; height: 3px; background: #0078d7; }
  .multi::after { background: linear-gradient(90deg, #0078d7 32px, #66a9e2 32px); }
  .ai { width: 34px; height: 32px; background: #330000; border-radius: 5px; color: #ff9a00; font: 700 19px/30px "Open Sans", sans-serif; text-align: center; margin-bottom: 3px; }
  .pct { font: 700 11px Inter, sans-serif; fill: #fff; }
  .cmdt { font: 700 8px "Liberation Mono", monospace; fill: #ddd; }
  .badged { position: relative; }
  .badged b { position: absolute; color: #fff; text-align: center; }
  .tg { right: -6px; bottom: -5px; width: 22px; height: 16px; border-radius: 5px; background: #ef3f3a; font: 11.5px/16px "Open Sans", sans-serif; }
  .wa { right: -4px; bottom: -4px; width: 24px; height: 24px; border-radius: 50%; background: #f00; font: 20px/24px "Liberation Sans", sans-serif; }
  .tray { flex: 1; display: flex; align-items: center; padding-left: 40px; color: #111; }
  .temp { width: 64px; margin-left: 12px; font-size: 19px; letter-spacing: -.4px; padding-top: 3px; }
  .chev { margin-left: 3px; }
  .meet { margin-left: 20px; }
  .sync { margin-left: 14px; }
  .batt { margin-left: 12px; }
  .wifi { margin-left: 15px; margin-top: 2px; }
  .vol { margin-left: 14px; }
  .clock { width: 100px; margin-left: 9px; display: flex; flex-direction: column; align-items: center; font-size: 17.5px; line-height: 28px; letter-spacing: 0; }
  .notif { margin-left: 20px; }
  .peek { width: 2px; height: 60px; margin-left: 29px; background: #b5adab; }
</style>
